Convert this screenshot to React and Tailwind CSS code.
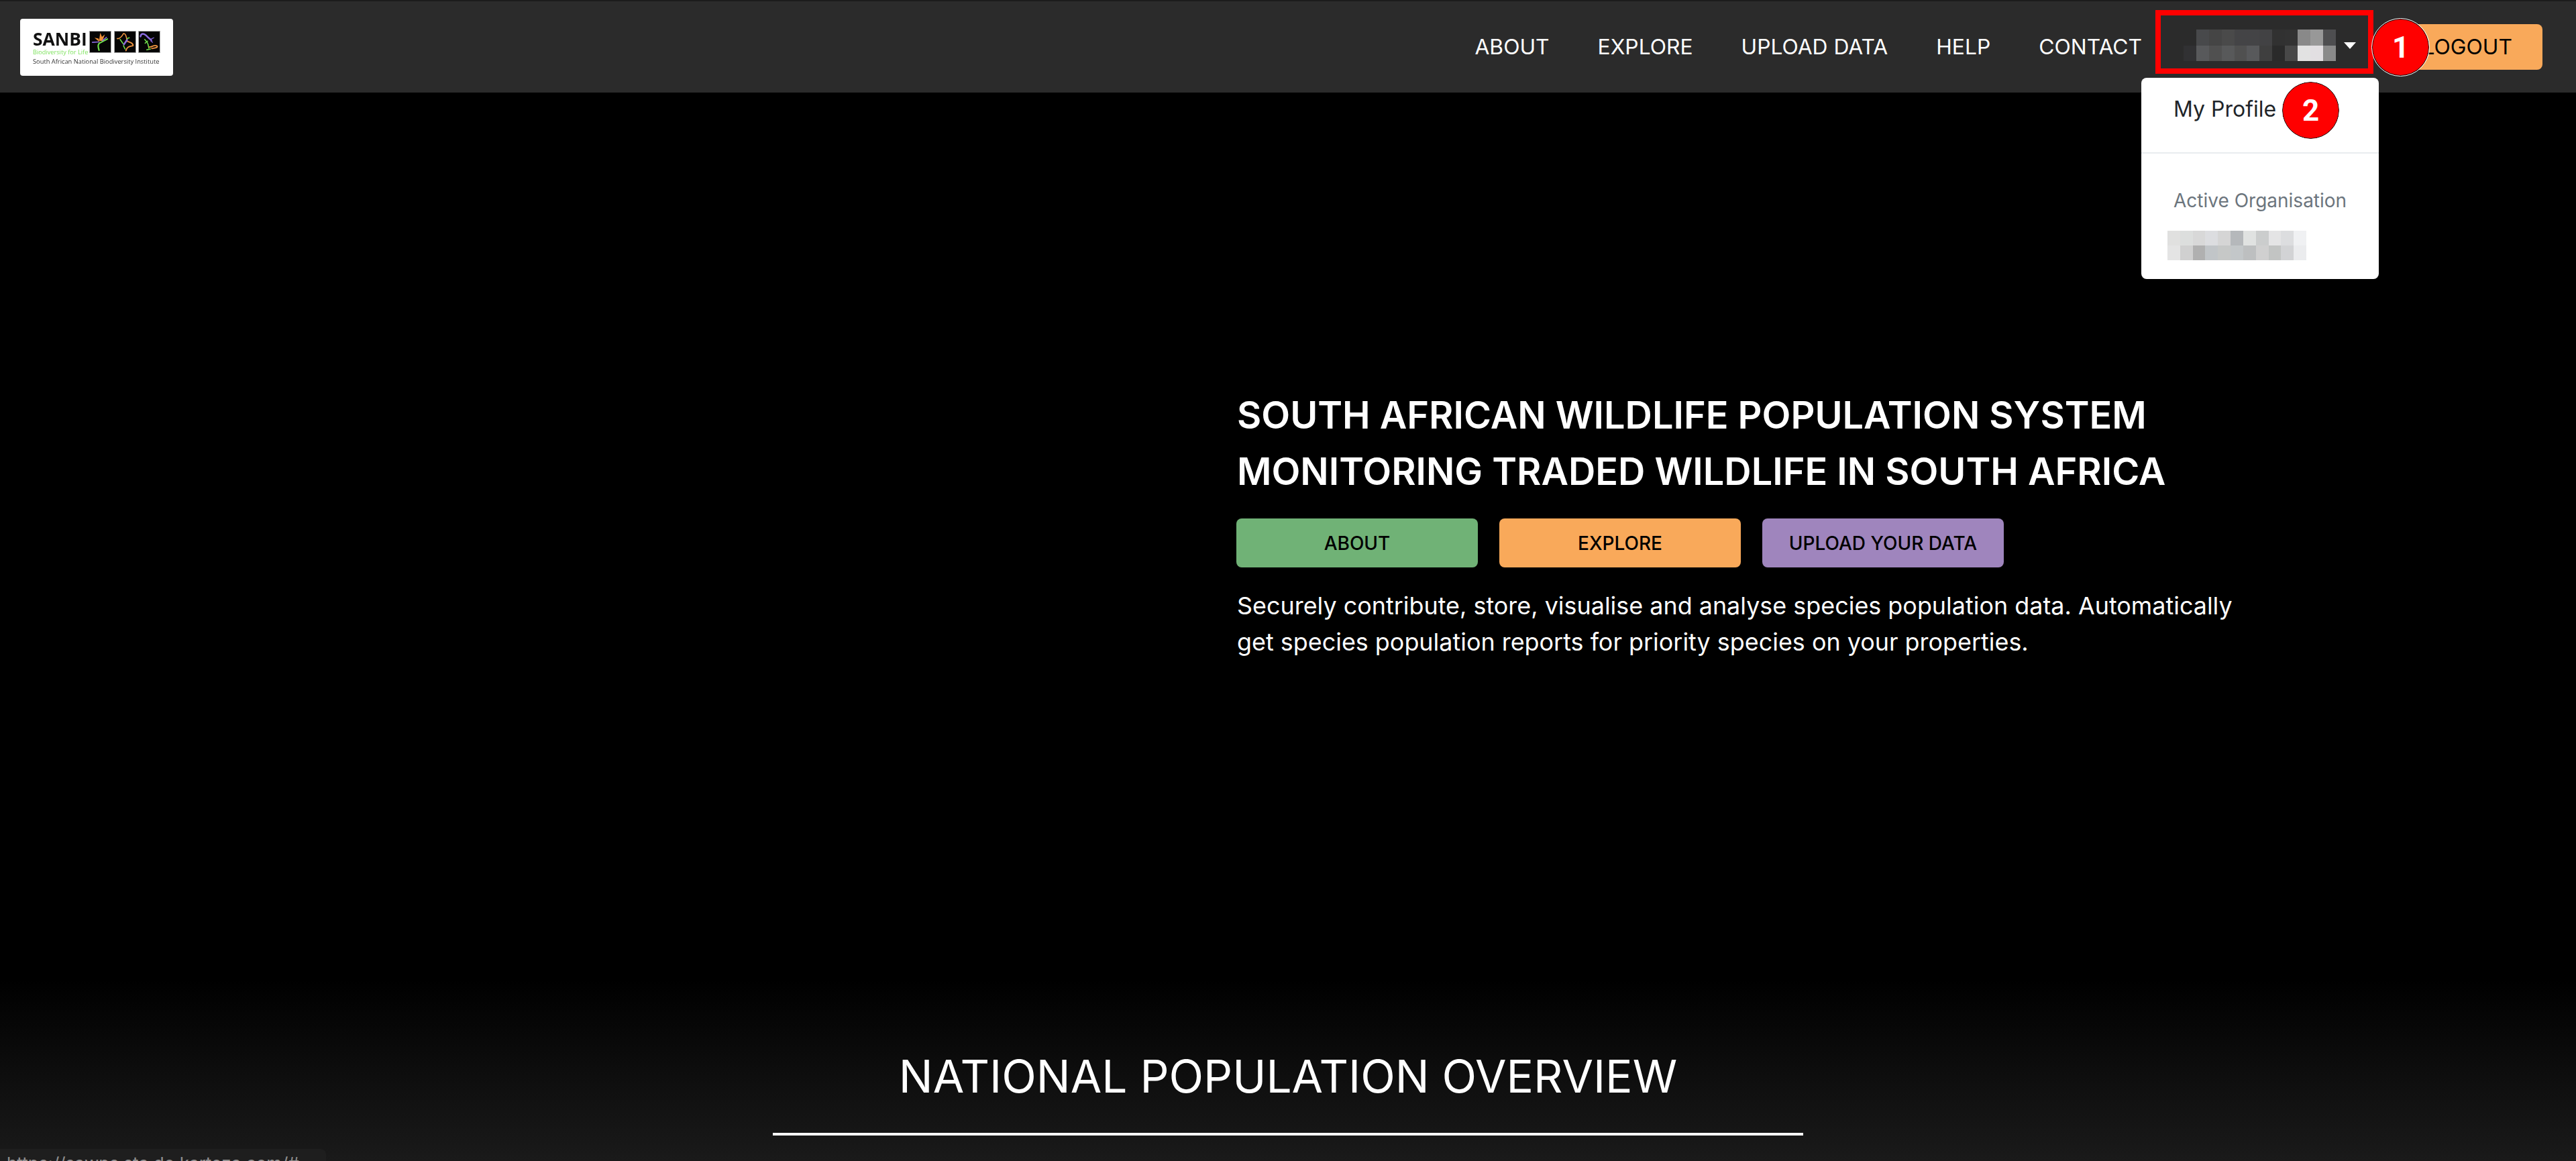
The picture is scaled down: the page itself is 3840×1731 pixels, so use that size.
const navLinks = ['ABOUT', 'EXPLORE', 'UPLOAD DATA', 'HELP', 'CONTACT'];

const heroButtons = [
  { label: 'ABOUT', color: 'bg-[#70b276]' },
  { label: 'EXPLORE', color: 'bg-[#f9a95a]' },
  { label: 'UPLOAD YOUR DATA', color: 'bg-[#9f85bd]' },
];

const userBlur = [
  'bg-transparent', 'bg-[#48494b]', 'bg-[#454545]', 'bg-[#4a4a4a]', 'bg-[#444446]', 'bg-[#444446]', 'bg-[#424244]', 'bg-[#313131]', 'bg-[#323232]', 'bg-[#898989]', 'bg-[#989898]', 'bg-[#4e4e50]',
  'bg-[#313133]', 'bg-[#58595b]', 'bg-[#505050]', 'bg-[#58595a]', 'bg-[#505050]', 'bg-[#58595b]', 'bg-[#3f3f3f]', 'bg-[#2a2a2a]', 'bg-[#484848]', 'bg-[#e2e2e2]', 'bg-[#e2dfe2]', 'bg-[#8a8a8a]',
];

const orgBlur = [
  'bg-[#e0e0df]', 'bg-[#dcdedd]', 'bg-[#d8d8d8]', 'bg-[#dcdde0]', 'bg-[#d5d5d5]', 'bg-[#b5b8bb]', 'bg-[#e0e2e1]', 'bg-[#cbcdcd]', 'bg-[#e4e4e5]', 'bg-[#dcdddf]', 'bg-[#f0f1f3]',
  'bg-[#e4e4e4]', 'bg-[#d0d0d0]', 'bg-[#b0b0b0]', 'bg-[#c1c5c8]', 'bg-[#c6c8c7]', 'bg-[#c3c7c9]', 'bg-[#bdbfc0]', 'bg-[#d0d0d0]', 'bg-[#c2c4c3]', 'bg-[#d2d3d5]', 'bg-[#ebecee]',
];

function LogoTile({ children }) {
  return (
    <svg viewBox="0 0 100 100" className="w-[33px] h-[33px] border border-[#aaa] bg-[#050505]">
      <g fill="none" strokeLinecap="round" strokeLinejoin="round">{children}</g>
    </svg>
  );
}

function Logo() {
  return (
    <div className="w-[228px] h-[85px] bg-white rounded-[4px] pt-[18px] pl-[19px] blur-[0.35px]">
      <div className="flex gap-[6px]">
        <div className="w-[78px] font-['Open_Sans',sans-serif] leading-none">
          <div className="text-[26.4px] font-bold text-[#111] h-[26px] leading-[25px] whitespace-nowrap">SANBI</div>
          <div className="text-[9.2px] text-[#7fe35f] leading-[10px] mt-[1px] whitespace-nowrap">Biodiversity for Life</div>
        </div>
        <div className="flex gap-[3.5px]">
          <LogoTile>
            <path d="M44 90 C38 72 40 60 46 56 L84 36" stroke="#6fe04a" strokeWidth="7" />
            <path d="M46 50 L22 30 L42 34 Z" fill="#f0913a" />
            <path d="M44 44 L50 6 L58 26 L72 14 L60 46 Z" fill="#f0913a" />
            <path d="M12 52 L44 50" stroke="#8b6be0" strokeWidth="5" />
            <path d="M60 44 L80 28" stroke="#8b6be0" strokeWidth="5" />
          </LogoTile>
          <LogoTile>
            <path d="M12 34 C24 36 34 24 42 10 C52 8 56 24 58 38 L44 64" stroke="#ee9440" strokeWidth="5" />
            <path d="M58 46 C72 52 90 54 88 68 C76 72 60 70 54 92" stroke="#ee9440" strokeWidth="6" />
            <path d="M44 62 L60 40" stroke="#8b6be0" strokeWidth="8" />
            <path d="M26 38 L40 58 M42 68 L50 84 M60 34 L70 30" stroke="#6fe04a" strokeWidth="5" />
          </LogoTile>
          <LogoTile>
            <path d="M8 24 C10 8 24 8 34 18 C44 30 52 34 60 42" stroke="#8b6be0" strokeWidth="8" />
            <path d="M60 36 L72 30 M58 46 L66 52" stroke="#8b6be0" strokeWidth="4" />
            <path d="M28 38 L40 52 C46 62 46 70 48 80 M30 56 L42 46 M38 88 L56 84" stroke="#6fe04a" strokeWidth="5" />
            <path d="M50 74 C64 78 72 60 88 70 C92 78 76 80 62 82" stroke="#ee9440" strokeWidth="6" />
          </LogoTile>
        </div>
      </div>
      <div className="font-['Open_Sans',sans-serif] text-[9.3px] text-[#333] leading-[12px] mt-[3px] whitespace-nowrap">
        South African National Biodiversity Institute
      </div>
    </div>
  );
}

function Marker({ className, children }) {
  return (
    <div className={`absolute w-[85px] h-[85px] rounded-full bg-[#ff0000] border border-black outline outline-1 outline-white flex items-center justify-center text-white font-bold text-[44px] font-['Roboto',sans-serif] ${className}`}>
      {children}
    </div>
  );
}

export default function App() {
  return (
    <div className="relative h-[1731px] overflow-hidden bg-black text-white font-['Inter',sans-serif] flex flex-col">
      {/* Navbar */}
      <header className="h-[138px] shrink-0 bg-[#2b2b2b] border-t-2 border-[#1c1c1c] flex items-center pl-[30px] pr-[50px]">
        <Logo />
        <nav className="ml-auto flex items-center gap-[72px] text-[31.78px] leading-none mr-[597px]">
          {navLinks.map((link) => (
            <a key={link} className="whitespace-nowrap">{link}</a>
          ))}
        </nav>
      </header>

      <div className="absolute right-[50px] top-[36px] w-[214px] h-[68px] rounded-[8px] bg-[#f9a95a] text-black text-[31.78px] flex items-center justify-end pr-[45px]">
        LOGOUT
      </div>

      {/* User menu */}
      <div className="absolute left-[3255px] top-[44px] w-[245px] grid grid-cols-[repeat(12,18.9px)] grid-rows-[24px_23px]">
        {userBlur.map((c, i) => (
          <div key={i} className={c} />
        ))}
      </div>
      <div className="absolute left-[3494px] top-[63px] w-0 h-0 border-x-[9px] border-x-transparent border-t-[10px] border-t-white" />
      <div className="absolute left-[3213px] top-[15px] w-[325px] h-[95px] border-[8px] border-[#ff0000]" />

      <div className="absolute left-[3192px] top-[116px] w-[354px] h-[300px] bg-white rounded-[8px] text-[#212529]">
        <div className="h-[113px] border-b-2 border-[#e9ecef] pl-[48px] pt-[24px] text-[32px] leading-[46px]">My Profile</div>
        <div className="pl-[48px] pt-[50px] text-[28px] leading-[40px] text-[#6c757d] whitespace-nowrap">Active Organisation</div>
        <div className="ml-[39px] mt-[25px] grid grid-cols-[repeat(11,18.82px)] grid-rows-[22px_22px]">
          {orgBlur.map((c, i) => (
            <div key={i} className={c} />
          ))}
        </div>
      </div>

      <Marker className="left-[3536px] top-[28px]">1</Marker>
      <Marker className="left-[3402px] top-[122px]">2</Marker>

      {/* Hero */}
      <main className="h-[1322px] shrink-0 pl-[1843px] pt-[439px]">
        <h1 className="text-[55.8px] leading-[84px] font-semibold pl-[1px] whitespace-nowrap">
          SOUTH AFRICAN WILDLIFE POPULATION SYSTEM
          <br />
          MONITORING TRADED WILDLIFE IN SOUTH AFRICA
        </h1>
        <div className="flex gap-[32px] mt-[28px]">
          {heroButtons.map((btn) => (
            <button key={btn.label} className={`w-[360px] h-[73px] rounded-[8px] text-black text-[28px] font-medium ${btn.color}`}>
              {btn.label}
            </button>
          ))}
        </div>
        <p className="mt-[30px] pl-[1px] text-[35.92px] leading-[54px] w-[1500px]">
          Securely contribute, store, visualise and analyse species population data. Automatically get species population reports for priority species on your properties.
        </p>
      </main>

      {/* National overview */}
      <section className="flex-1 bg-linear-to-b/srgb from-black to-[#1a1a1a] flex flex-col items-center">
        <h2 className="mt-[105px] text-[67.5px] leading-[80px] whitespace-nowrap">NATIONAL POPULATION OVERVIEW</h2>
        <div className="w-[1536px] h-[4px] bg-white mt-[44px]" />
      </section>

      {/* Browser status bubble */}
      <div className="absolute left-0 top-[1713px] w-[486px] h-[40px] bg-[#1e1e1e] rounded-tr-[8px] pl-[10px] pt-[6px] text-[#8f8f8f] text-[26px] leading-[32px] whitespace-nowrap">
        https://sawps.sta.do.kartoza.com/#
      </div>
    </div>
  );
}
